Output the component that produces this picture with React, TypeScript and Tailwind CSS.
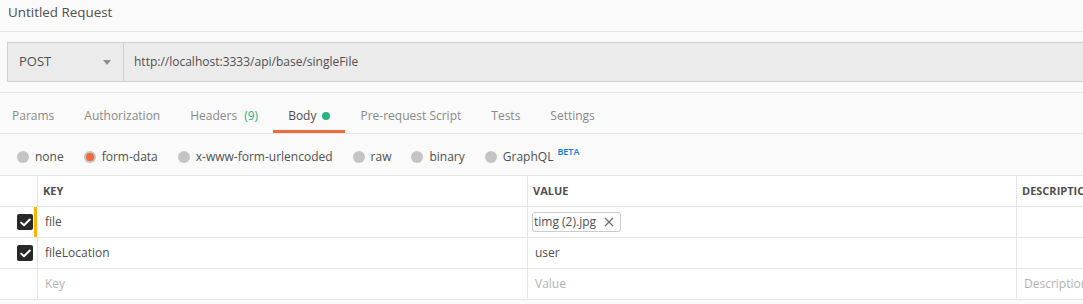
import { FC } from "react";

const tabs = [
  { name: "Params" },
  { name: "Authorization" },
  { name: "Headers", count: "(9)" },
  { name: "Body", active: true },
  { name: "Pre-request Script" },
  { name: "Tests" },
  { name: "Settings" },
];

const bodyTypes = ["none", "form-data", "x-www-form-urlencoded", "raw", "binary", "GraphQL"];

const CheckBox: FC = () => (
  <div className="flex h-[16px] w-[16px] shrink-0 items-center justify-center rounded-[2px] bg-[#282828]">
    <svg width="11" height="9" viewBox="0 0 11 9" fill="none">
      <path d="M1.2 4.6 L4 7.3 L9.8 1.5" stroke="#fff" strokeWidth="2" strokeLinecap="round" strokeLinejoin="round" />
    </svg>
  </div>
);

const Radio: FC<{ checked?: boolean }> = ({ checked }) => (
  <span className="flex h-[12px] w-[12px] items-center justify-center rounded-full bg-[#c4c4c4]">
    {checked && <span className="h-[8px] w-[8px] rounded-full bg-[#f26b3a]"></span>}
  </span>
);

const App: FC = () => {
  return (
    <div
      className="h-[304px] w-full overflow-hidden bg-[#fafafa] text-[12px] text-[#505050]"
      style={{ fontFamily: '"Open Sans", "Liberation Sans", sans-serif' }}
    >
      {/* title */}
      <div className="h-[32px] border-b border-[#e6e6e6] pl-[8px] text-[13.4px] leading-[25px]">
        Untitled Request
      </div>

      {/* url bar */}
      <div className="border-b border-[#e6e6e6] pl-[7px] py-[10px]">
        <div className="flex h-[40px] border-y border-l border-[#d0d0d0] bg-[#ebebeb]">
          <div className="flex w-[116px] items-center justify-between border-r border-[#d0d0d0] pl-[11px] pr-[12px] text-[13px]">
            <span>POST</span>
            <svg width="8" height="5" viewBox="0 0 8 5">
              <path d="M0 0 H8 L4 5 Z" fill="#909090" />
            </svg>
          </div>
          <div className="flex items-center pl-[10px]">http://localhost:3333/api/base/singleFile</div>
        </div>
      </div>

      {/* tabs */}
      <div className="flex h-[41px] border-b border-[#e6e6e6]">
        <div className="-ml-[3px] flex">
          {tabs.map((tab) => (
            <div key={tab.name} className="flex flex-col px-[15px]">
              <div
                className={`flex items-center gap-[6px] pt-[14px] leading-[18px] ${
                  tab.active ? "text-[#505050]" : "text-[#8a8a8a]"
                }`}
              >
                <span>
                  {tab.name}
                  {tab.count && <span className="ml-[7px] text-[#26b47f]">{tab.count}</span>}
                </span>
                {tab.active && <span className="h-[8px] w-[8px] rounded-full bg-[#26b47f]"></span>}
              </div>
              <div className={`mt-auto h-[3px] -mx-[15px] ${tab.active ? "bg-[#f26b3a]" : ""}`}></div>
            </div>
          ))}
        </div>
      </div>

      {/* body type */}
      <div className="flex h-[41px] items-center gap-[20px] pl-[17px] pt-[5px]">
        {bodyTypes.map((type) => (
          <div key={type} className="flex items-center gap-[6px]">
            <Radio checked={type === "form-data"} />
            <span>{type}</span>
            {type === "GraphQL" && (
              <span className="-ml-[2px] -mt-[10px] text-[9px] font-semibold text-[#097bed]">BETA</span>
            )}
          </div>
        ))}
      </div>

      {/* table */}
      <div className="border-t border-[#e6e6e6] bg-white">
        <div className="flex h-[31px] border-b border-[#e6e6e6] text-[11px] font-bold uppercase text-[#505050]">
          <div className="w-[38px] shrink-0 border-r border-[#e6e6e6]"></div>
          <div className="flex w-[490px] shrink-0 items-center border-r border-[#e6e6e6] pl-[5px]">Key</div>
          <div className="flex w-[489px] shrink-0 items-center border-r border-[#e6e6e6] pl-[5px]">Value</div>
          <div className="flex flex-1 items-center whitespace-nowrap pl-[5px]">Description</div>
        </div>

        <div className="flex h-[31px] border-b border-[#e6e6e6]">
          <div className="flex w-[38px] shrink-0 items-center pl-[17px]">
            <CheckBox />
            <div className="ml-[1px] h-full w-[3px] bg-[#ffb400]"></div>
          </div>
          <div className="flex w-[490px] shrink-0 items-center border-r border-[#e6e6e6] pl-[7px]">file</div>
          <div className="flex w-[489px] shrink-0 items-center border-r border-[#e6e6e6] pl-[4px]">
            <div className="flex h-[20px] items-center gap-[8px] rounded-[3px] border border-[#cccccc] bg-white pl-[1px] pr-[6px]">
              <span>timg (2).jpg</span>
              <svg width="10" height="10" viewBox="0 0 10 10">
                <path d="M1 1 L9 9 M9 1 L1 9" stroke="#707070" strokeWidth="1.3" />
              </svg>
            </div>
          </div>
          <div className="flex-1"></div>
        </div>

        <div className="flex h-[31px] border-b border-[#e6e6e6]">
          <div className="flex w-[38px] shrink-0 items-center border-r border-[#e6e6e6] pl-[17px]">
            <CheckBox />
          </div>
          <div className="flex w-[490px] shrink-0 items-center border-r border-[#e6e6e6] pl-[7px]">fileLocation</div>
          <div className="flex w-[489px] shrink-0 items-center border-r border-[#e6e6e6] pl-[7px]">user</div>
          <div className="flex-1"></div>
        </div>

        <div className="flex h-[31px] border-b border-[#e6e6e6] text-[#b3b3b3]">
          <div className="w-[38px] shrink-0 border-r border-[#e6e6e6]"></div>
          <div className="flex w-[490px] shrink-0 items-center border-r border-[#e6e6e6] pl-[7px]">Key</div>
          <div className="flex w-[489px] shrink-0 items-center border-r border-[#e6e6e6] pl-[7px]">Value</div>
          <div className="flex flex-1 items-center whitespace-nowrap pl-[7px]">Description</div>
        </div>
      </div>
    </div>
  );
};

export default App;
